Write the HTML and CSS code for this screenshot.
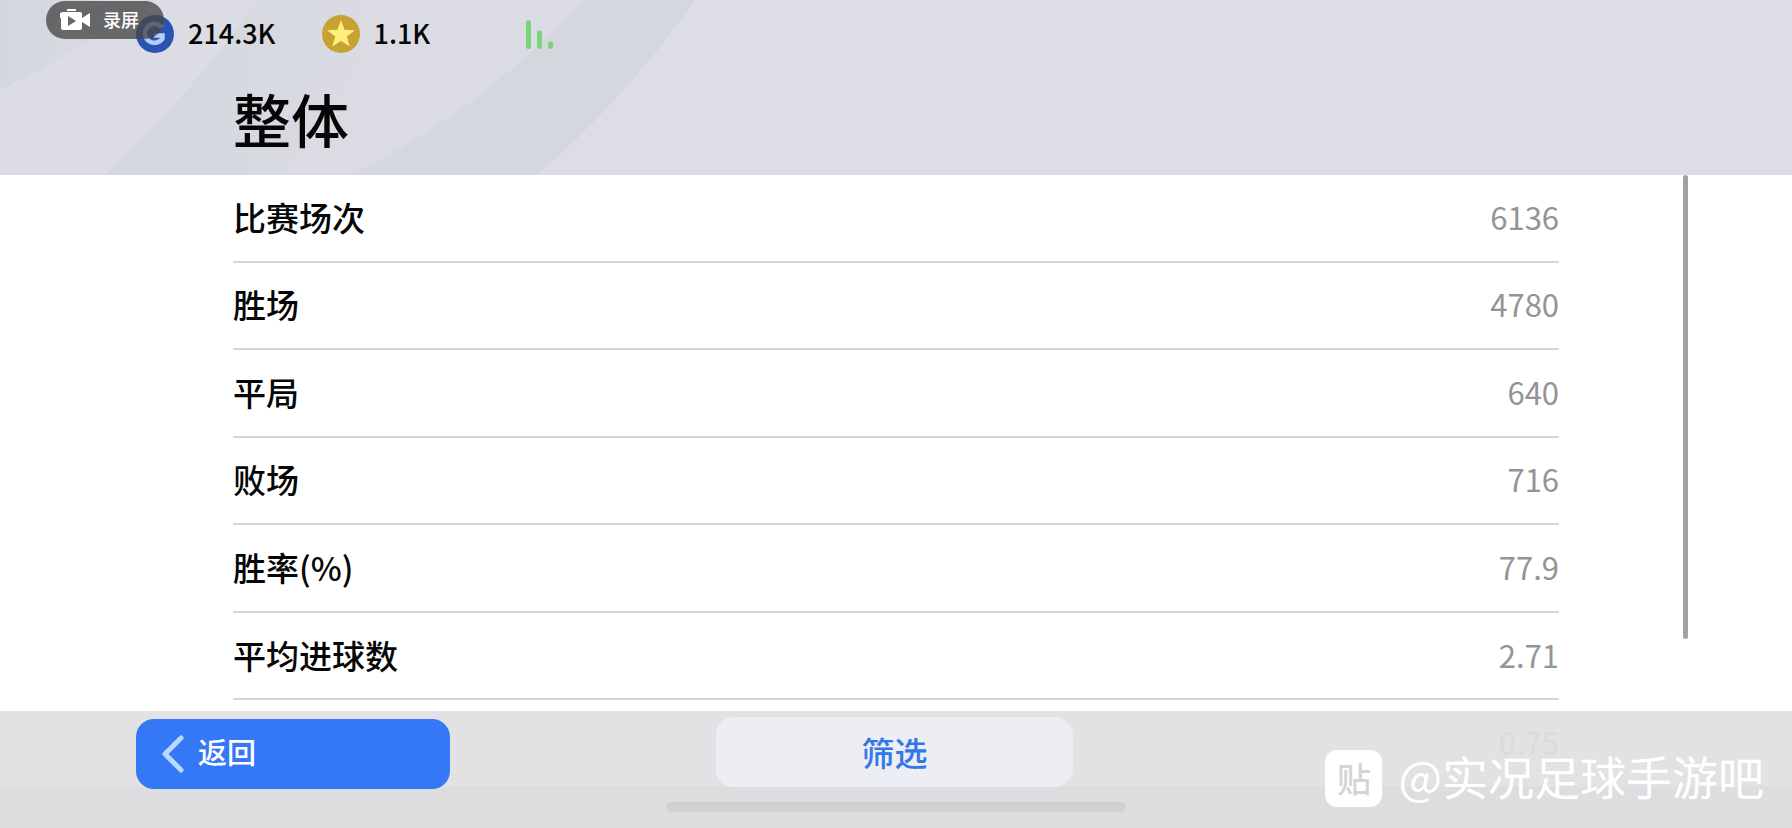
FILE: index.html
```html
<!DOCTYPE html>
<html lang="zh-CN">
<head>
<meta charset="utf-8">
<meta name="viewport" content="width=device-width, initial-scale=1">
<title>整体</title>
<link rel="stylesheet" href="styles.css">
</head>
<body>
<div class="screen">
  <header class="top">
    <svg class="top-art" viewBox="0 0 720 175" aria-hidden="true">
      <defs>
        <linearGradient id="fadeA" x1="0" x2="1" y1="0" y2="0"><stop offset="0" stop-color="#d4d6df"/><stop offset="1" stop-color="#dcdde4"/></linearGradient>
        <linearGradient id="fadeB" gradientUnits="userSpaceOnUse" x1="150" x2="400" y1="0" y2="0"><stop offset="0" stop-color="#d5d7df"/><stop offset="1" stop-color="#dadbe3"/></linearGradient>
      </defs>
      <path fill="#dcdde4" d="M0 0H690V175H0Z"/>
      <path fill="url(#fadeA)" d="M0 0H158Q90 45 0 90Z"/>
      <path fill="url(#fadeB)" d="M105 175Q190 95 258 0H585Q480 110 350 175Z"/>
      <path fill="#dadbe3" d="M280 175Q340 105 400 0H585Q480 110 350 175Z"/>
      <path fill="#d5d7df" d="M350 175Q475 115 585 0H695Q625 100 537 175Z"/>
      <path fill="#dcdde6" d="M537 175Q625 100 695 0H720V175Z"/>
    </svg>
    <div class="wallet">
      <div class="coin">
        <svg class="coin-icon" viewBox="0 0 38 38" aria-hidden="true">
          <circle cx="19" cy="19" r="19" fill="#2b53b4"/>
          <path d="M26 12.500A9.500 9.500 0 1 0 26.500 23.500V20.500H18" fill="none" stroke="#b5cdfa" stroke-width="4.500"/>
        </svg>
        <span>214.3K</span>
      </div>
      <div class="coin">
        <svg class="coin-icon" viewBox="0 0 38 38" aria-hidden="true">
          <circle cx="19" cy="19" r="19" fill="#c6a233"/>
          <path d="M19 5l3.600 9.800 10.400.4-8.200 6.400 2.900 10-8.700-5.700-8.700 5.700 2.900-10-8.200-6.400 10.400-.4z" fill="#ffed7c"/>
        </svg>
        <span>1.1K</span>
      </div>
      <svg class="signal" viewBox="0 0 28 29" role="img" aria-label="信号">
        <path d="M2.500 2.500v24M13.500 13v13.500M24.500 24v2.500" stroke="#7bd47c" stroke-width="5" stroke-linecap="round"/>
      </svg>
    </div>
    <h1 class="title">整体</h1>
    <div class="recorder">
      <svg class="camera" viewBox="0 0 31 22" aria-hidden="true">
        <path fill="#fff" d="M7 0h9v2H7zM3 3h17q2 0 2 2v4l8-5v14l-8-5v6q0 2-2 2H3q-2 0-2-2V9H0V4h1q0-1 2-1z"/>
        <path fill="#666" d="M8 7l8 5-8 5z"/>
      </svg>
      <span>录屏</span>
    </div>
  </header>

  <main class="stats">
    <table class="table">
      <tbody>
        <tr><th scope="row">比赛场次</th><td>6136</td></tr>
        <tr><th scope="row">胜场</th><td>4780</td></tr>
        <tr><th scope="row">平局</th><td>640</td></tr>
        <tr><th scope="row">败场</th><td>716</td></tr>
        <tr><th scope="row">胜率(%)</th><td>77.9</td></tr>
        <tr><th scope="row">平均进球数</th><td>2.71</td></tr>
        <tr><th></th><td>0.75</td></tr>
      </tbody>
    </table>
    <div class="scroll-thumb"></div>
  </main>

  <footer class="bar">
    <div class="actions">
      <button class="btn back" type="button">
        <svg class="chevron" viewBox="0 0 22 38" aria-hidden="true"><path d="M19 3L3 19l16 16" fill="none" stroke="#b9d9ff" stroke-width="5" stroke-linecap="round" stroke-linejoin="round"/></svg>
        <span class="back-label">返回</span>
      </button>
      <button class="btn filter" type="button">筛选</button>
    </div>
    <div class="home"></div>
  </footer>

  <div class="watermark">
    <span class="badge">贴</span>
    <span class="handle">@实况足球手游吧</span>
  </div>
</div>
</body>
</html>
```
FILE: styles.css
```css
* { box-sizing: border-box; }

body {
  margin: 0;
  background: #fff;
  color: #060606;
  font-family: "Noto Sans CJK SC", "Noto Sans", sans-serif;
}

.screen {
  position: relative;
  display: flex;
  flex-direction: column;
  height: 100vh;
  overflow: hidden;
}

/* Header */
.top {
  position: relative;
  flex: none;
  padding: 15px 13% 15px 136px;
  background: #dcdde6;
}

.top-art {
  position: absolute;
  top: 0;
  left: 0;
  height: 100%;
}

.wallet {
  position: relative;
  display: flex;
  align-items: center;
  gap: 46px;
  height: 38px;
  font-size: 27px;
  line-height: 38px;
  font-weight: 500;
}

.coin { display: flex; align-items: center; gap: 14px; }
.coin-icon { width: 38px; height: 38px; }
.coin span { padding-bottom: 2px; }
.signal { width: 28px; height: 29px; margin-left: 50px; }

.title {
  position: relative;
  margin: 23px 0 0 97px;
  font-size: 58px;
  line-height: 84px;
  font-weight: 500;
}

.recorder {
  position: absolute;
  top: 1px;
  left: 46px;
  display: flex;
  align-items: center;
  gap: 12px;
  padding: 0 25px 0 14px;
  height: 38px;
  border-radius: 19px;
  background: rgba(70, 70, 70, .78);
  color: #fff;
  font-size: 18px;
  font-weight: 500;
}

.recorder span { padding-bottom: 2px; }
.camera { width: 31px; height: 22px; }

/* Statistics */
.stats {
  position: relative;
  flex: 1;
  min-height: 0;
  padding: 0 13%;
  overflow: hidden;
}

.table {
  width: 100%;
  height: 613px;
  border-collapse: separate;
  border-spacing: 0;
}

.table th,
.table td {
  padding: 0 0 2px;
  border-bottom: 2px solid #d6d6d6;
}

.table th {
  text-align: left;
  font-size: 33px;
  line-height: 48px;
  font-weight: 500;
}

.table td {
  text-align: right;
  color: #949494;
  font-size: 31px;
  line-height: 48px;
  font-weight: 400;
}

.scroll-thumb {
  position: absolute;
  top: 0;
  right: 104px;
  width: 5px;
  height: 71%;
  border-radius: 3px;
  background: #a2a2a2;
}

/* Bottom bar lies over the scrolling list */
.bar {
  position: absolute;
  right: 0;
  bottom: 0;
  left: 0;
  padding: 6px 0 16px;
  background: linear-gradient(rgba(224, 224, 226, .93) 65%, rgba(220, 220, 222, .96) 65%);
}

.actions {
  display: grid;
  grid-template-columns: 1fr 20% 1fr;
  align-items: start;
  padding-right: 3px;
}

.btn {
  height: 70px;
  border: 0;
  border-radius: 18px;
  font-family: inherit;
  font-weight: 500;
}

.back {
  display: flex;
  align-items: center;
  gap: 14px;
  width: 314px;
  margin: 2px 0 0 136px;
  padding: 0 26px;
  background: #3478f6;
  color: #fff;
  font-size: 29px;
  line-height: 40px;
}

.back-label { padding-bottom: 6px; }
.chevron { width: 22px; height: 38px; }

.filter {
  background: #ededf4;
  color: #3478e8;
  font-size: 33px;
  line-height: 48px;
}

.home {
  width: 460px;
  height: 10px;
  margin: 13px auto 0;
  border-radius: 5px;
  background: #d0d0d1;
}

/* Watermark */
.watermark {
  position: absolute;
  right: 28px;
  bottom: 16px;
  display: flex;
  align-items: center;
  gap: 16px;
  color: #fff;
  font-size: 46px;
  line-height: 62px;
  font-weight: 400;
}

.handle { padding-bottom: 6px; }

.badge {
  width: 57px;
  height: 57px;
  border-radius: 12px;
  background: #fff;
  color: #d4d4d5;
  font-size: 34px;
  line-height: 55px;
  font-weight: 500;
  text-align: center;
}
```
